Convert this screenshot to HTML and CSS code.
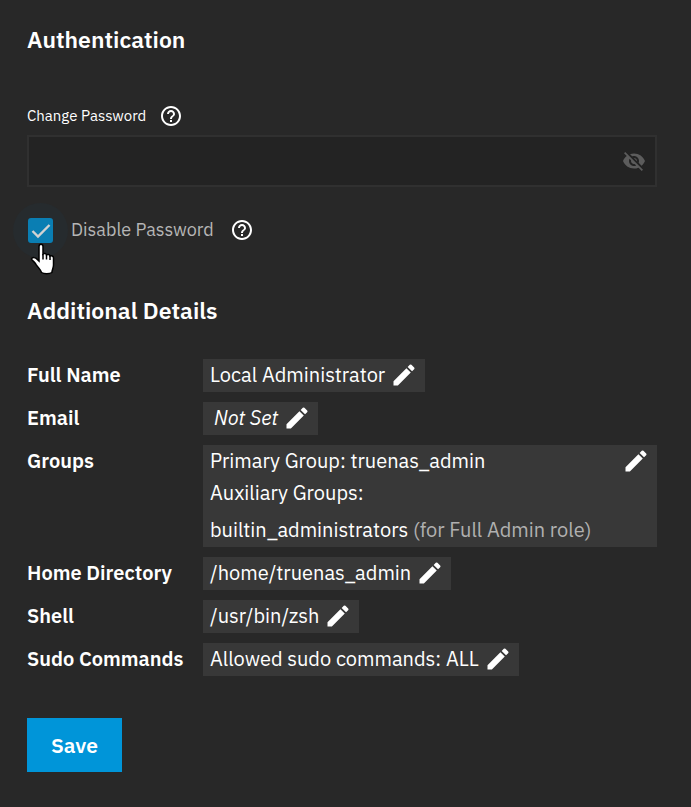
FILE: index.html
```html
<!DOCTYPE html>
<html lang="en">
<head>
<meta charset="utf-8">
<meta name="viewport" content="width=device-width, initial-scale=1">
<title>Edit User</title>
<link rel="stylesheet" href="styles.css">
</head>
<body>
<svg class="defs" aria-hidden="true">
  <symbol id="pencil" viewBox="0 0 24 24"><path d="M3 17.25V21h3.75L17.81 9.94l-3.75-3.75L3 17.25zM20.71 7.04a1 1 0 0 0 0-1.41l-2.34-2.34a1 1 0 0 0-1.41 0l-1.83 1.83 3.75 3.75 1.83-1.83z"/></symbol>
  <symbol id="help" viewBox="0 0 24 24"><path d="M11 18h2v-2h-2v2zm1-16C6.480 2 2 6.480 2 12s4.480 10 10 10 10-4.480 10-10S17.520 2 12 2zm0 18c-4.410 0-8-3.590-8-8s3.590-8 8-8 8 3.590 8 8-3.590 8-8 8zm0-14c-2.210 0-4 1.790-4 4h2c0-1.100.9-2 2-2s2 .9 2 2c0 2-3 1.750-3 5h2c0-2.250 3-2.500 3-5 0-2.210-1.790-4-4-4z"/></symbol>
</svg>
<form class="form">
  <h2 class="title">Authentication</h2>
  <div class="label-row">
    <label for="password">Change Password</label>
    <button type="button" class="icon-button" aria-label="Password help"><svg class="help"><use href="#help"/></svg></button>
  </div>
  <div class="field">
    <input id="password" class="field-input" type="password" disabled>
    <button type="button" class="icon-button" aria-label="Show password" disabled>
      <svg class="eye" viewBox="0 0 24 24"><path d="M12 7c2.760 0 5 2.240 5 5 0 .65-.13 1.260-.36 1.830l2.920 2.920c1.510-1.260 2.700-2.890 3.430-4.750-1.730-4.390-6-7.500-11-7.500-1.400 0-2.740.25-3.980.7l2.160 2.160C10.740 7.130 11.350 7 12 7zM2 4.270l2.280 2.280.46.46C3.080 8.300 1.780 10.020 1 12c1.730 4.390 6 7.500 11 7.500 1.550 0 3.030-.3 4.380-.84l.42.42L19.730 22 21 20.730 3.270 3 2 4.270zM7.530 9.800l1.550 1.550c-.05.21-.08.43-.08.65 0 1.660 1.340 3 3 3 .22 0 .44-.03.65-.08l1.550 1.550c-.67.33-1.410.53-2.200.53-2.760 0-5-2.240-5-5 0-.79.2-1.530.53-2.200zm4.310-.78l3.150 3.150.02-.16c0-1.660-1.340-3-3-3l-.17.01z"/></svg>
    </button>
  </div>
  <div class="check-row">
    <span class="check">
      <input id="disable-password" class="check-input" type="checkbox" checked>
      <svg class="tick" viewBox="0 0 25 25" aria-hidden="true"><path d="M4.500 13l5.500 5.500L21.500 7"/></svg>
      <svg class="cursor" viewBox="0 0 26 33" aria-hidden="true"><path d="M9 3.500c0-3 4-3 4 0V11c1-1 3.200-.7 3.500.8 1.200-.8 3.200-.4 3.500 1.200 1.500-.6 3.500 0 3.500 2v7c0 3-1.300 4-1.600 7.500-2.400 1.600-8 1.600-10.400 0-.7-2.800-3.500-5-5.500-8.200C4.700 19 2.400 17.800 1.500 16c.9-2.200 4-1.600 5.800.4L9 18z"/><path class="fingers" d="M13 11v5.500M16.500 12v4.500M20 13v4"/></svg>
    </span>
    <label for="disable-password">Disable Password</label>
    <button type="button" class="icon-button" aria-label="Disable password help"><svg class="help"><use href="#help"/></svg></button>
  </div>

  <h2 class="title">Additional Details</h2>
  <dl class="details">
    <dt>Full Name</dt>
    <dd><div class="chip"><span>Local Administrator</span><button type="button" class="icon-button" aria-label="Edit full name"><svg class="pencil"><use href="#pencil"/></svg></button></div></dd>
    <dt>Email</dt>
    <dd><div class="chip"><em class="unset">Not Set</em><button type="button" class="icon-button" aria-label="Edit email"><svg class="pencil"><use href="#pencil"/></svg></button></div></dd>
    <dt>Groups</dt>
    <dd><div class="chip chip-wide">
      <div class="groups">
        <div>Primary Group: truenas_admin</div>
        <div>Auxiliary Groups:</div>
        <div class="group-list">builtin_administrators <span class="muted">(for Full Admin role)</span></div>
      </div>
      <button type="button" class="icon-button" aria-label="Edit groups"><svg class="pencil"><use href="#pencil"/></svg></button>
    </div></dd>
    <dt>Home Directory</dt>
    <dd><div class="chip"><span>/home/truenas_admin</span><button type="button" class="icon-button" aria-label="Edit home directory"><svg class="pencil"><use href="#pencil"/></svg></button></div></dd>
    <dt>Shell</dt>
    <dd><div class="chip"><span>/usr/bin/zsh</span><button type="button" class="icon-button" aria-label="Edit shell"><svg class="pencil"><use href="#pencil"/></svg></button></div></dd>
    <dt>Sudo Commands</dt>
    <dd><div class="chip"><span>Allowed sudo commands: ALL</span><button type="button" class="icon-button" aria-label="Edit sudo commands"><svg class="pencil"><use href="#pencil"/></svg></button></div></dd>
  </dl>
  <button type="submit" class="save">Save</button>
</form>
</body>
</html>
```
FILE: styles.css
```css
* { box-sizing: border-box; }
body {
  margin: 0;
  background: #282828;
  color: #fff;
  font: 20px/32px "IBM Plex Sans", Roboto, "Liberation Sans", sans-serif;
}
.defs { position: absolute; width: 0; height: 0; }
svg { display: block; fill: currentColor; }
.form { padding: 23px 34px 34px 27px; }
.title { margin: 0; font-size: 23px; line-height: 32px; font-weight: 600; }
.icon-button { flex: none; padding: 0; border: 0; background: none; color: inherit; }
.help { width: 24px; height: 24px; }
.label-row {
  display: flex;
  align-items: center;
  gap: 13px;
  margin-top: 49px;
  font-size: 15px;
  line-height: 24px;
}
.field {
  display: flex;
  align-items: center;
  height: 52px;
  margin-top: 7px;
  padding-right: 9px;
  border: 2px solid #303030;
  background: #232323;
  color: #5c5c5c;
}
.field-input {
  flex: 1;
  min-width: 0;
  height: 100%;
  padding: 0 12px;
  border: 0;
  background: none;
  color: inherit;
  font: inherit;
}
.eye { width: 24px; height: 24px; }
.check-row {
  display: flex;
  align-items: center;
  height: 32px;
  margin: 27px 0 48px;
  padding-left: 1px;
  font-size: 18px;
  color: #b5b5b5;
}
.check-row .icon-button { margin-left: 16px; color: #fff; }
.check {
  position: relative;
  width: 25px;
  height: 25px;
  margin-right: 18px;
}
.check::before {
  content: "";
  position: absolute;
  inset: -15px;
  border-radius: 50%;
  background: #262b2e;
}
.check-input {
  position: relative;
  display: block;
  appearance: none;
  width: 100%;
  height: 100%;
  margin: 0;
  border-radius: 3px;
  background: #0a7eb3;
}
.tick { position: absolute; inset: 0; fill: none; stroke: #d2d2d2; stroke-width: 2.4; pointer-events: none; }
.cursor {
  position: absolute;
  top: 25px;
  left: 2px;
  width: 26px;
  height: 33px;
  fill: #fff;
  stroke: #000;
  stroke-width: 1.5;
  pointer-events: none;
}
.fingers { fill: none; }
.details {
  display: grid;
  grid-template-columns: 176px minmax(0, 1fr);
  row-gap: 10px;
  margin: 33px 0 42px;
}
.details dt { font-weight: 600; line-height: 32px; }
.details dd { margin: 0; }
.chip {
  display: flex;
  align-items: flex-start;
  gap: 5px;
  width: fit-content;
  max-width: 100%;
  min-height: 33px;
  padding: 0 7px;
  background: #383838;
}
.chip .icon-button { padding-top: 2px; }
.chip-wide { width: 100%; justify-content: space-between; padding-bottom: 1px; }
.pencil { width: 28px; height: 28px; }
.unset { padding-left: 4px; }
.group-list { margin-top: 5px; }
.muted { color: #b0b0b0; }
.save {
  display: block;
  height: 54px;
  padding: 0 24px;
  border: 0;
  background: #0095d9;
  color: #fff;
  font: inherit;
  font-size: 21px;
  font-weight: 600;
}
```
